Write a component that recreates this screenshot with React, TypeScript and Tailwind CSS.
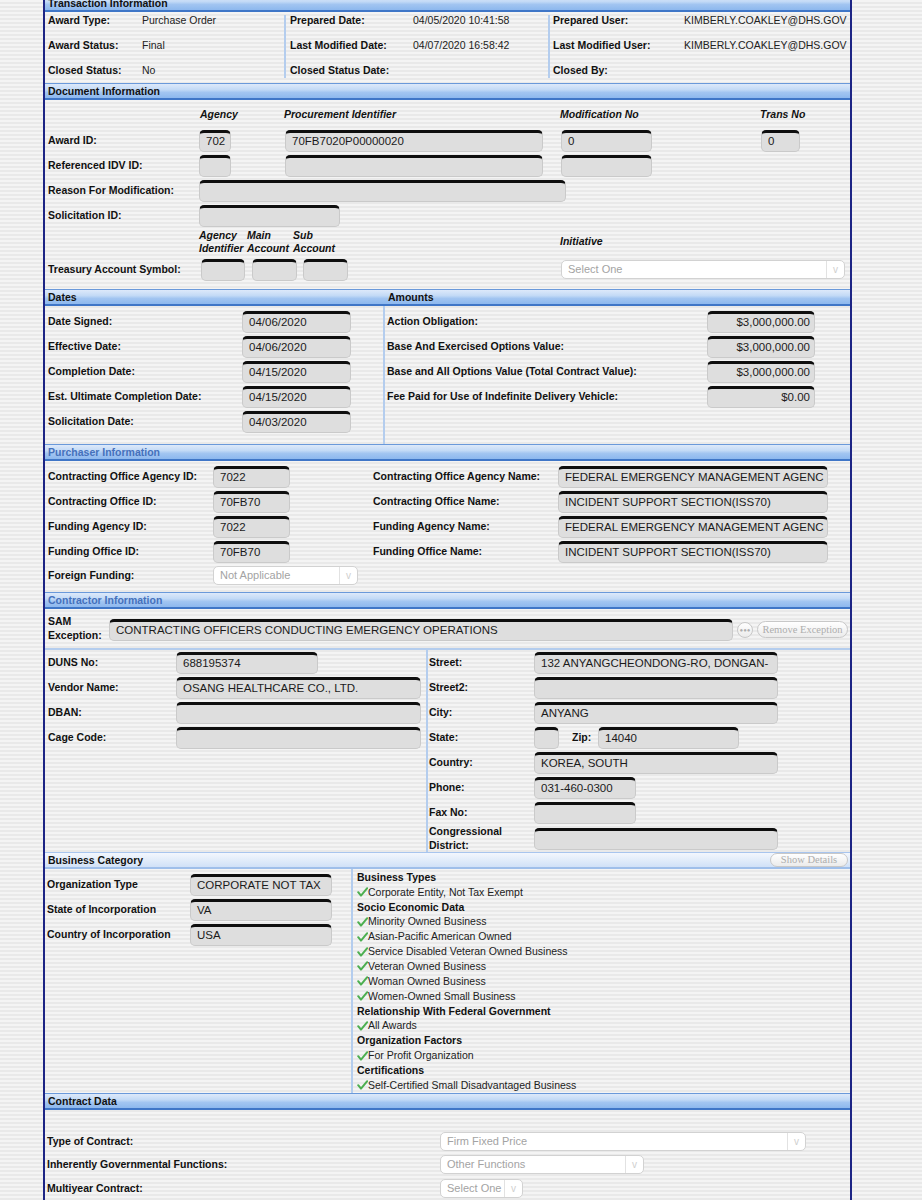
import React from "react";

const FIELD =
  "h-[22px] shrink-0 overflow-hidden whitespace-nowrap rounded-[5px] border border-[#cacaca] border-t-[3px] border-t-[#0e0e0e] bg-[#dedede] pl-[6px] pr-[4px] text-[11.5px] leading-[17px] text-[#1b1b1b]";

function Field({ className = "", children }: { className?: string; children?: React.ReactNode }) {
  return <div className={`${FIELD} ${className}`}>{children}</div>;
}

function Select({ className = "", value }: { className?: string; value: string }) {
  return (
    <div
      className={`flex h-[19px] shrink-0 items-stretch overflow-hidden rounded-[5px] border border-[#d2d2d2] bg-white text-[11px] text-[#a3a3a3] ${className}`}
    >
      <span className="flex-1 truncate pl-[6px] leading-[17px]">{value}</span>
      <span className="flex w-[18px] items-center justify-center border-l border-[#e2e2e2] text-[10px] text-[#cfcfcf]">
        v
      </span>
    </div>
  );
}

function Header({
  children,
  tone = "normal",
}: {
  children: React.ReactNode;
  tone?: "normal" | "light";
}) {
  const look =
    tone === "light"
      ? "border-t-[#a8c5ee] border-b-[#9fbfea] bg-[linear-gradient(to_bottom,#f3f7fd_0%,#e2ecfa_50%,#d0e1f7_100%)]"
      : "border-t-[#6a99da] border-b-[#3f76c7] bg-[linear-gradient(to_bottom,#dde9fa_0%,#c3daf6_40%,#a2c5f1_60%,#8db8ee_100%)]";
  return (
    <div className={`flex h-[17px] items-center border-t border-b-2 font-bold leading-[14px] ${look}`}>
      {children}
    </div>
  );
}

function Pill({ className = "", children }: { className?: string; children: React.ReactNode }) {
  return (
    <div
      className={`shrink-0 rounded-full border border-[#c8c8c8] bg-[linear-gradient(to_bottom,#ffffff,#ebebeb)] text-center font-['Liberation_Serif',serif] text-[10.5px] text-[#adadad] ${className}`}
    >
      {children}
    </div>
  );
}

function Check() {
  return (
    <svg width="11" height="10" viewBox="0 0 11 10" className="shrink-0">
      <path
        d="M1.2 5.2 L4 8.6 L10.2 1.2"
        fill="none"
        stroke="#4caf50"
        strokeWidth="2"
        strokeLinecap="round"
        strokeLinejoin="round"
      />
    </svg>
  );
}

function TxRow({ label, value, w }: { label: string; value?: string; w: string }) {
  return (
    <div className="flex h-[25px] leading-[16px]">
      <span className={`${w} shrink-0 font-bold`}>{label}</span>
      <span className="whitespace-nowrap text-[#222]">{value}</span>
    </div>
  );
}

const businessList: { text: string; head?: boolean }[] = [
  { text: "Business Types", head: true },
  { text: "Corporate Entity, Not Tax Exempt" },
  { text: "Socio Economic Data", head: true },
  { text: "Minority Owned Business" },
  { text: "Asian-Pacific American Owned" },
  { text: "Service Disabled Veteran Owned Business" },
  { text: "Veteran Owned Business" },
  { text: "Woman Owned Business" },
  { text: "Women-Owned Small Business" },
  { text: "Relationship With Federal Government", head: true },
  { text: "All Awards" },
  { text: "Organization Factors", head: true },
  { text: "For Profit Organization" },
  { text: "Certifications", head: true },
  { text: "Self-Certified Small Disadvantaged Business" },
];

const DIV = "w-[2px] shrink-0 bg-[#b4cdee]";

export default function App() {
  return (
    <div className="h-[1200px] w-full overflow-hidden bg-[repeating-linear-gradient(to_bottom,#f4f4f4_0px,#f4f4f4_2px,#e9e9e9_2px,#e9e9e9_4px)] font-['Liberation_Sans',Arial,sans-serif] text-[10.5px] text-[#111]">
      <div className="-mt-[5px] ml-[43px] w-[809px] border-x-2 border-[#1d2585] pb-[40px]">
        {/* Transaction Information */}
        <Header>
          <span className="pl-[3px]">Transaction Information</span>
        </Header>
        <div className="flex h-[71px]">
          <div className="w-[239px] shrink-0 pl-[3px]">
            <TxRow w="w-[94px]" label="Award Type:" value="Purchase Order" />
            <TxRow w="w-[94px]" label="Award Status:" value="Final" />
            <TxRow w="w-[94px]" label="Closed Status:" value="No" />
          </div>
          <div className={`${DIV} mb-[5px] mt-[3px]`} />
          <div className="w-[262px] shrink-0 pl-[4px]">
            <TxRow w="w-[123px]" label="Prepared Date:" value="04/05/2020 10:41:58" />
            <TxRow w="w-[123px]" label="Last Modified Date:" value="04/07/2020 16:58:42" />
            <TxRow w="w-[123px]" label="Closed Status Date:" />
          </div>
          <div className={`${DIV} mb-[5px] mt-[3px]`} />
          <div className="flex-1 pl-[3px]">
            <TxRow w="w-[131px]" label="Prepared User:" value="KIMBERLY.COAKLEY@DHS.GOV" />
            <TxRow w="w-[131px]" label="Last Modified User:" value="KIMBERLY.COAKLEY@DHS.GOV" />
            <TxRow w="w-[131px]" label="Closed By:" />
          </div>
        </div>

        {/* Document Information */}
        <Header>
          <span className="pl-[3px]">Document Information</span>
        </Header>
        <div className="pl-[3px]">
          <div className="flex h-[30px] items-center font-bold italic">
            <div className="w-[152px] shrink-0" />
            <div className="w-[84px] shrink-0">Agency</div>
            <div className="w-[276px] shrink-0">Procurement Identifier</div>
            <div className="w-[200px] shrink-0">Modification No</div>
            <div>Trans No</div>
          </div>
          <div className="flex h-[25px] items-start">
            <span className="w-[151px] shrink-0 font-bold leading-[21px]">Award ID:</span>
            <Field className="w-[32px]">702</Field>
            <Field className="ml-[54px] w-[258px]">70FB7020P00000020</Field>
            <Field className="ml-[18px] w-[91px]">0</Field>
            <Field className="ml-[109px] w-[39px]">0</Field>
          </div>
          <div className="flex h-[25px] items-start">
            <span className="w-[151px] shrink-0 font-bold leading-[21px]">Referenced IDV ID:</span>
            <Field className="w-[32px]" />
            <Field className="ml-[54px] w-[258px]" />
            <Field className="ml-[18px] w-[91px]" />
          </div>
          <div className="flex h-[25px] items-start">
            <span className="w-[151px] shrink-0 font-bold leading-[21px]">Reason For Modification:</span>
            <Field className="w-[367px]" />
          </div>
          <div className="flex h-[25px] items-start">
            <span className="w-[151px] shrink-0 font-bold leading-[21px]">Solicitation ID:</span>
            <Field className="w-[141px]" />
          </div>
          <div className="-mt-[2px] flex h-[27px] items-center font-bold italic leading-[13px]">
            <div className="w-[151px] shrink-0" />
            <div className="w-[48px] shrink-0">
              Agency
              <br />
              Identifier
            </div>
            <div className="w-[46px] shrink-0">
              Main
              <br />
              Account
            </div>
            <div className="w-[267px] shrink-0">
              Sub
              <br />
              Account
            </div>
            <div>Initiative</div>
          </div>
          <div className="flex h-[34px] items-start pt-[4px]">
            <span className="w-[153px] shrink-0 font-bold leading-[21px]">Treasury Account Symbol:</span>
            <Field className="w-[44px]" />
            <Field className="ml-[7px] w-[45px]" />
            <Field className="ml-[6px] w-[45px]" />
            <Select className="ml-[213px] mt-[1px] w-[284px]" value="Select One" />
          </div>
        </div>

        {/* Dates / Amounts */}
        <Header>
          <span className="w-[343px] shrink-0 pl-[3px]">Dates</span>
          <span>Amounts</span>
        </Header>
        <div className="flex">
          <div className="w-[338px] shrink-0 pb-[8px] pl-[3px] pt-[5px]">
            {[
              ["Date Signed:", "04/06/2020"],
              ["Effective Date:", "04/06/2020"],
              ["Completion Date:", "04/15/2020"],
              ["Est. Ultimate Completion Date:", "04/15/2020"],
              ["Solicitation Date:", "04/03/2020"],
            ].map(([l, v]) => (
              <div key={l} className="flex h-[25px] items-start">
                <span className="w-[194px] shrink-0 font-bold leading-[21px]">{l}</span>
                <Field className="w-[109px]">{v}</Field>
              </div>
            ))}
          </div>
          <div className={DIV} />
          <div className="flex-1 pl-[2px] pt-[5px]">
            {[
              ["Action Obligation:", "$3,000,000.00"],
              ["Base And Exercised Options Value:", "$3,000,000.00"],
              ["Base and All Options Value (Total Contract Value):", "$3,000,000.00"],
              ["Fee Paid for Use of Indefinite Delivery Vehicle:", "$0.00"],
            ].map(([l, v]) => (
              <div key={l} className="flex h-[25px] items-start">
                <span className="w-[320px] shrink-0 font-bold leading-[21px]">{l}</span>
                <Field className="w-[108px] text-right">{v}</Field>
              </div>
            ))}
          </div>
        </div>

        {/* Purchaser Information */}
        <Header>
          <span className="pl-[3px] text-[#4571bc]">Purchaser Information</span>
        </Header>
        <div className="pl-[3px] pt-[5px]">
          {[
            ["Contracting Office Agency ID:", "7022", "Contracting Office Agency Name:", "FEDERAL EMERGENCY MANAGEMENT AGENC"],
            ["Contracting Office ID:", "70FB70", "Contracting Office Name:", "INCIDENT SUPPORT SECTION(ISS70)"],
            ["Funding Agency ID:", "7022", "Funding Agency Name:", "FEDERAL EMERGENCY MANAGEMENT AGENC"],
            ["Funding Office ID:", "70FB70", "Funding Office Name:", "INCIDENT SUPPORT SECTION(ISS70)"],
          ].map(([l1, v1, l2, v2]) => (
            <div key={l1} className="flex h-[25px] items-start">
              <span className="w-[165px] shrink-0 font-bold leading-[21px]">{l1}</span>
              <Field className="w-[77px]">{v1}</Field>
              <span className="ml-[83px] w-[185px] shrink-0 font-bold leading-[21px]">{l2}</span>
              <Field className="w-[270px]">{v2}</Field>
            </div>
          ))}
          <div className="flex h-[26px] items-start">
            <span className="w-[165px] shrink-0 font-bold leading-[19px]">Foreign Funding:</span>
            <Select className="w-[145px]" value="Not Applicable" />
          </div>
        </div>

        {/* Contractor Information */}
        <Header>
          <span className="pl-[3px] text-[#4571bc]">Contractor Information</span>
        </Header>
        <div className="flex h-[41px] items-start border-b-2 border-[#b4cdee] pl-[3px]">
          <span className="mt-[5px] w-[61px] shrink-0 font-bold leading-[14px]">
            SAM
            <br />
            Exception:
          </span>
          <Field className="mt-[10px] w-[624px]">CONTRACTING OFFICERS CONDUCTING EMERGENCY OPERATIONS</Field>
          <Pill className="ml-[4px] mt-[13px] flex h-[16px] w-[16px] items-center justify-center font-['Liberation_Sans',sans-serif] text-[5px] leading-[5px] text-[#9a9a9a]">
            •••
          </Pill>
          <Pill className="ml-[4px] mt-[12px] h-[17px] w-[91px] leading-[15px]">Remove Exception</Pill>
        </div>
        <div className="flex">
          <div className="w-[381px] shrink-0 pl-[3px] pt-[2px]">
            {[
              ["DUNS No:", "688195374", "w-[142px]"],
              ["Vendor Name:", "OSANG HEALTHCARE CO., LTD.", "w-[245px]"],
              ["DBAN:", "", "w-[245px]"],
              ["Cage Code:", "", "w-[245px]"],
            ].map(([l, v, w]) => (
              <div key={l} className="flex h-[25px] items-start">
                <span className="w-[128px] shrink-0 font-bold leading-[20px]">{l}</span>
                <Field className={w}>{v}</Field>
              </div>
            ))}
          </div>
          <div className={DIV} />
          <div className="flex-1 pl-[1px] pt-[2px]">
            <div className="flex h-[25px] items-start">
              <span className="w-[105px] shrink-0 font-bold leading-[20px]">Street:</span>
              <Field className="w-[244px]">132 ANYANGCHEONDONG-RO, DONGAN-</Field>
            </div>
            <div className="flex h-[25px] items-start">
              <span className="w-[105px] shrink-0 font-bold leading-[20px]">Street2:</span>
              <Field className="w-[244px]" />
            </div>
            <div className="flex h-[25px] items-start">
              <span className="w-[105px] shrink-0 font-bold leading-[20px]">City:</span>
              <Field className="w-[244px]">ANYANG</Field>
            </div>
            <div className="flex h-[25px] items-start">
              <span className="w-[105px] shrink-0 font-bold leading-[20px]">State:</span>
              <Field className="w-[25px]" />
              <span className="ml-[13px] w-[26px] shrink-0 font-bold leading-[20px]">Zip:</span>
              <Field className="w-[141px]">14040</Field>
            </div>
            <div className="flex h-[25px] items-start">
              <span className="w-[105px] shrink-0 font-bold leading-[20px]">Country:</span>
              <Field className="w-[244px]">KOREA, SOUTH</Field>
            </div>
            <div className="flex h-[25px] items-start">
              <span className="w-[105px] shrink-0 font-bold leading-[20px]">Phone:</span>
              <Field className="w-[102px]">031-460-0300</Field>
            </div>
            <div className="flex h-[25px] items-start">
              <span className="w-[105px] shrink-0 font-bold leading-[20px]">Fax No:</span>
              <Field className="w-[102px]" />
            </div>
            <div className="flex h-[25px] items-start">
              <span className="-mt-[3px] w-[105px] shrink-0 font-bold leading-[14px]">
                Congressional
                <br />
                District:
              </span>
              <Field className="mt-[1px] w-[244px]" />
            </div>
          </div>
        </div>

        {/* Business Category */}
        <Header tone="light">
          <span className="pl-[3px]">Business Category</span>
          <Pill className="ml-auto mr-[2px] h-[14px] w-[78px] font-normal leading-[12px]">Show Details</Pill>
        </Header>
        <div className="flex">
          <div className="w-[306px] shrink-0 pl-[2px] pt-[5px]">
            {[
              ["Organization Type", "CORPORATE NOT TAX"],
              ["State of Incorporation", "VA"],
              ["Country of Incorporation", "USA"],
            ].map(([l, v]) => (
              <div key={l} className="flex h-[25px] items-start">
                <span className="w-[143px] shrink-0 font-bold leading-[20px]">{l}</span>
                <Field className="w-[142px]">{v}</Field>
              </div>
            ))}
          </div>
          <div className={DIV} />
          <div className="flex-1 pl-[4px] pt-[1px] leading-[15px]">
            {businessList.map((b) =>
              b.head ? (
                <div key={b.text} className="h-[14.85px] font-bold">
                  {b.text}
                </div>
              ) : (
                <div key={b.text} className="flex h-[14.85px] items-center text-[#222]">
                  <Check />
                  <span>{b.text}</span>
                </div>
              )
            )}
          </div>
        </div>

        {/* Contract Data */}
        <Header>
          <span className="pl-[3px]">Contract Data</span>
        </Header>
        <div className="pl-[2px] pt-[22px]">
          {[
            ["Type of Contract:", "Firm Fixed Price", "w-[366px]"],
            ["Inherently Governmental Functions:", "Other Functions", "w-[204px]"],
            ["Multiyear Contract:", "Select One", "w-[83px]"],
          ].map(([l, v, w]) => (
            <div key={l} className="flex h-[23.5px] items-start">
              <span className="w-[393px] shrink-0 font-bold leading-[19px]">{l}</span>
              <Select className={`h-[18px] ${w}`} value={v} />
            </div>
          ))}
        </div>
      </div>
    </div>
  );
}
